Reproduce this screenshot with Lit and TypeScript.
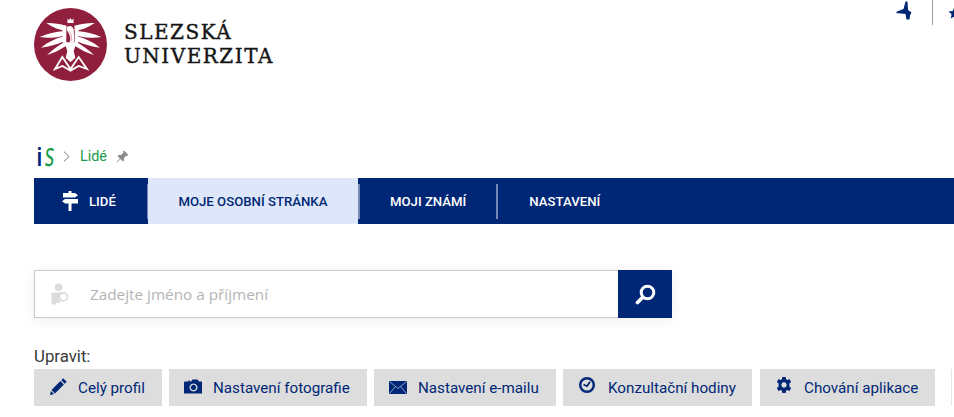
import { LitElement, html, css, svg, unsafeCSS } from "lit";
import { customElement } from "lit/decorators.js";

const NAVY = "#002776";
const navy = unsafeCSS(NAVY);

const wing = svg`
  <path d="M50 54 C68 53 88 56 110 62 L110 78 C92 76 68 68 50 54 Z"/>
  <path d="M30 96 C52 86 78 80 104 78 L104 92 C80 98 54 100 30 96 Z"/>
  <path d="M34 128 C54 112 78 100 104 94 L104 109 C82 118 58 126 34 128 Z"/>
  <path d="M52 150 C68 134 88 120 106 110 L110 122 C92 134 72 144 52 150 Z"/>
  <path d="M98 62 L110 62 L110 124 L100 120 Z"/>
`;

const logo = svg`
  <svg class="logo" viewBox="13 9 219 219" aria-hidden="true">
    <circle cx="122.5" cy="118.5" r="109.5" fill="#8f1f3d"/>
    <g fill="#fff">
      ${wing}
      <g transform="translate(245 0) scale(-1 1)">${wing}</g>
      <path d="M114 40 L118 46 L122.5 39 L127 46 L131 40 L132 54 L113 54 Z"/>
      <path d="M104 112 L141 112 L132 138 L137 158 L122.5 172 L108 158 L113 138 Z"/>
      <path d="M112 66 C120 60 130 64 132 74 L134 112 L120 112 C124 100 120 88 112 76 Z"/>
      <path fill="none" stroke="#fff" stroke-width="5.500" d="M76 192 L98 156 L122.500 192 L147 156 L172 192 L147 183 L122.500 197 L98 183 Z"/>
    </g>
    <path fill="#e9b9c3" d="M118 78 C123 80 128 90 128 108 L122 108 C124 98 122 88 118 78 Z"/>
  </svg>
`;

const sign = svg`
  <svg class="sign" viewBox="0 0 16 20" aria-hidden="true">
    <path fill="#fff" d="M6.500 0h3v2H13l3 2.200-3 2.300H1V2h5.500zM3 8h13v4.500H9.500V20h-3v-7.500H3L0 10.250z"/>
  </svg>
`;

const pin = svg`
  <svg class="pin" viewBox="0 0 13 13" aria-hidden="true">
    <path fill="#8b8b8b" d="M8 .5 12.500 5 11.500 6 10.500 5.500 8 8 8 10.500 7 11.500 4.500 9 1 12.500 .5 12 4 8.500 1.500 6 2.500 5 5 5 7.500 2.500 7 1.500z"/>
  </svg>
`;

const personSearch = svg`
  <svg class="person" viewBox="0 0 20 23" aria-hidden="true">
    <circle cx="8" cy="4" r="4" fill="#dcdcdc"/>
    <path fill="#dcdcdc" d="M2 9.500h11c1 0 1.500.6 1.500 1.500A5.500 5.500 0 0 0 8 17.500l-2 2c-.5.500-.8 1.500-.8 2.500H3c-1.500 0-2.500-1-2.500-2.500V11C.5 10 1 9.500 2 9.500z"/>
    <circle cx="13" cy="14" r="4.300" fill="none" stroke="#dcdcdc" stroke-width="1.800"/>
    <path stroke="#dcdcdc" stroke-width="2.600" stroke-linecap="round" d="M10 17 7.500 19.500"/>
  </svg>
`;

const glass = svg`
  <svg class="glass" viewBox="0 0 21 21" aria-hidden="true">
    <circle cx="12.500" cy="8.500" r="6.300" fill="none" stroke="#fff" stroke-width="3"/>
    <path stroke="#fff" stroke-width="3.800" stroke-linecap="round" d="M7.500 13.500 2.500 18.500"/>
  </svg>
`;

const pencil = svg`
  <svg viewBox="0 0 17 17" aria-hidden="true">
    <path fill="${NAVY}" d="M13.200.3 16.700 3.800 14.800 5.700 11.300 2.200zM10.400 3.100 13.900 6.600 5 15.500 1.500 12zM.900 12.900 4.100 16.100 0 17z"/>
  </svg>
`;

const camera = svg`
  <svg viewBox="0 0 18 15" aria-hidden="true">
    <path fill="${NAVY}" fill-rule="evenodd" d="M1 2.500h3.500V1.500h1.500V2.500h1L8.500 .5h5L15 2.500h3V14.500H0V3.500C0 3 .5 2.500 1 2.500zM9.500 4.500a4 4 0 1 0 .01 0zM9.500 5.800a2.700 2.700 0 1 1-.01 0z"/>
  </svg>
`;

const mail = svg`
  <svg viewBox="0 0 18 13" aria-hidden="true">
    <rect width="18" height="13" fill="${NAVY}"/>
    <path fill="none" stroke="#9fb0d3" stroke-width=".9" d="M.5.500 9 7.500 17.500.500M.5 12.500 6.500 5.500M17.500 12.500 11.500 5.500"/>
  </svg>
`;

const clock = svg`
  <svg viewBox="0 0 16 16" aria-hidden="true">
    <circle cx="8" cy="8" r="6.800" fill="none" stroke="${NAVY}" stroke-width="2.400"/>
    <path fill="none" stroke="${NAVY}" stroke-width="1.700" d="M4.500 7.600 8 9.200 11 4.800"/>
  </svg>
`;

const gear = svg`
  <svg viewBox="0 0 16 16" aria-hidden="true">
    <path fill="${NAVY}" fill-rule="evenodd" d="M6.300 0h3.400l.4 2.200 1.200.7 2.100-.8 1.700 3-1.700 1.400v3l1.700 1.400-1.700 3-2.100-.8-1.200.7-.4 2.200H6.300l-.4-2.200-1.200-.7-2.100.8-1.700-3 1.700-1.400v-3L.9 5.100l1.700-3 2.100.8 1.200-.7zM8 5.300a2.700 2.700 0 1 0 .01 0z"/>
  </svg>
`;

const topMark = svg`
  <svg class="mark" viewBox="0 0 17 19" aria-hidden="true">
    <path fill="${NAVY}" d="M9.500.5 11.500.5 12 9 15.500 11.500 14 14.500 13.500 18.500 10.500 18.500 9.500 13 0 12 1 10.500 7.500 8Z"/>
  </svg>
`;

const star = svg`
  <svg class="star" viewBox="0 0 13 12" aria-hidden="true">
    <path fill="${NAVY}" d="M6.500 0 8.300 3.900 12.600 4.400 9.400 7.300 10.300 11.500 6.500 9.400 2.700 11.500 3.600 7.300 .4 4.400 4.700 3.900z"/>
  </svg>
`;

@customElement("app-root")
export class AppRoot extends LitElement {
  static styles = css`
    :host {
      display: block;
      width: 100vw;
      height: 100vh;
      overflow: hidden;
      background: #fff;
      font-family: Roboto, "Liberation Sans", sans-serif;
      box-sizing: border-box;
      padding-left: 34px;
    }
    svg { display: block; flex: none; }
    .top {
      display: flex;
      justify-content: space-between;
      align-items: flex-start;
      height: 139px;
    }
    .brand {
      display: flex;
      align-items: flex-start;
      padding-top: 8px;
      gap: 17px;
    }
    .logo { width: 73px; height: 73px; }
    .wordmark {
      padding-top: 12px;
      font-family: "DejaVu Serif", "Liberation Serif", serif;
      font-size: 20px;
      line-height: 24px;
      letter-spacing: 1.500px;
      color: #151515;
      -webkit-text-stroke: 0.4px #151515;
    }
    .tools {
      display: flex;
      align-items: flex-start;
      width: 58px;
      flex: none;
      overflow: hidden;
    }
    .mark { width: 17px; height: 19px; margin-top: 1px; margin-right: 19px; }
    .vline { width: 1px; height: 25px; background: #9b9b9b; margin-right: 15px; flex: none; }
    .star { width: 13px; height: 12px; margin-top: 7px; flex: none; }
    .crumbs {
      display: flex;
      align-items: center;
      height: 34px;
      padding-bottom: 5px;
      box-sizing: content-box;
    }
    .is {
      display: flex;
      align-items: baseline;
      width: 29px;
      padding-left: 2px;
      font-family: "Noto Sans", sans-serif;
      font-size: 25px;
      line-height: 26px;
      font-weight: 500;
      box-sizing: border-box;
    }
    .is i { font-style: normal; color: ${navy}; margin-right: 1px; }
    .is b {
      display: inline-block;
      font-weight: 500;
      color: #1a9e4b;
      transform: scaleX(0.68) skewX(-6deg);
      transform-origin: left bottom;
    }
    .chev { width: 7px; height: 11px; margin-right: 10px; }
    .here { color: #1a9c45; font-size: 14.400px; margin-right: 9px; }
    .pin { width: 13px; height: 13px; }
    nav {
      display: flex;
      align-items: stretch;
      height: 46px;
      background: ${navy};
      font-size: 13.200px;
      font-weight: 500;
      color: #fff;
    }
    nav a {
      display: flex;
      align-items: center;
      padding: 0 30px;
      text-transform: uppercase;
    }
    nav a.home { padding: 0 31px 0 28px; gap: 11px; }
    nav a.active { background: #dde7f9; color: ${navy}; padding: 0 30.500px; }
    nav a.last { padding: 0 32px 0 31px; }
    .sign { width: 16px; height: 20px; }
    .sep { flex: none; width: 2px; height: 35px; align-self: center; background: #7389b6; }
    .sep.thin { width: 1px; }
    .search {
      display: flex;
      width: 638px;
      height: 48px;
      margin-top: 46px;
      box-shadow: 0 2px 12px rgba(0, 0, 0, 0.07);
    }
    .field {
      flex: 1;
      display: flex;
      align-items: center;
      border: 1px solid #c9c9c9;
      border-right: none;
      padding-left: 16px;
      gap: 20px;
    }
    .person { width: 19px; height: 23px; }
    .field input {
      flex: 1;
      min-width: 0;
      border: none;
      outline: none;
      background: none;
      padding: 0;
      font-family: "Open Sans", sans-serif;
      font-size: 15.300px;
    }
    .field input::placeholder { color: #b5b5b5; opacity: 1; }
    .go {
      width: 54px;
      flex: none;
      border: none;
      padding: 0;
      display: flex;
      align-items: center;
      justify-content: center;
      background: ${navy};
    }
    .glass { width: 21px; height: 21px; }
    .label {
      margin-top: 29px;
      font-size: 16.800px;
      line-height: 18px;
      color: #3a3a3a;
    }
    .actions {
      display: flex;
      gap: 7px;
      margin-top: 4px;
      height: 37px;
    }
    .actions a {
      display: flex;
      align-items: center;
      flex: none;
      box-sizing: border-box;
      background: #dddddd;
      color: ${navy};
      font-size: 15.200px;
    }
    .actions a svg { margin-right: 11px; }
    .i17 { padding: 0 17px 0 16px; width: 128px; }
    .i17 svg { width: 17px; height: 17px; margin-top: -2px; }
    .i18c { padding: 0 16px 0 15px; width: 198px; }
    .i18c svg { width: 18px; height: 15px; margin-top: -2px; }
    .i18m { padding: 0 16px 0 15px; width: 182px; }
    .i18m svg { width: 18px; height: 13px; }
    .i16 { padding: 0 15px 0 16px; width: 189px; }
    .i16 svg { width: 16px; height: 16px; margin-top: -6px; }
    .actions .i16 svg { margin-right: 13px; }
    .i16g { padding: 0 16px; width: 175px; margin-left: 1px; }
    .i16g svg { width: 16px; height: 16px; margin-top: -6px; }
    .actions .i16g svg { margin-right: 12px; }
    .actions a.more {
      width: 1px;
      margin-left: 9px;
      background: #e6e6e6;
    }
  `;

  render() {
    return html`
      <div class="top">
        <div class="brand">
          ${logo}
          <div class="wordmark">SLEZSKÁ<br />UNIVERZITA</div>
        </div>
        <div class="tools">${topMark}<span class="vline"></span>${star}</div>
      </div>
      <div class="crumbs">
        <span class="is"><i>i</i><b>S</b></span>
        <svg class="chev" viewBox="0 0 7 11" aria-hidden="true">
          <path fill="none" stroke="#777" d="M.8.500 6 5.500 .8 10.500" />
        </svg>
        <span class="here">Lidé</span>
        ${pin}
      </div>
      <nav>
        <a class="home">${sign}Lidé</a>
        <span class="sep thin"></span>
        <a class="active">Moje osobní stránka</a>
        <span class="sep"></span>
        <a>Moji známí</a>
        <span class="sep"></span>
        <a class="last">Nastavení</a>
      </nav>
      <div class="search">
        <div class="field">
          ${personSearch}
          <input placeholder="Zadejte jméno a příjmení" />
        </div>
        <button class="go" aria-label="Hledat">${glass}</button>
      </div>
      <div class="label">Upravit:</div>
      <div class="actions">
        <a class="i17">${pencil}Celý profil</a>
        <a class="i18c">${camera}Nastavení fotografie</a>
        <a class="i18m">${mail}Nastavení e-mailu</a>
        <a class="i16">${clock}Konzultační hodiny</a>
        <a class="i16g">${gear}Chování aplikace</a>
        <a class="more"></a>
      </div>
    `;
  }
}
